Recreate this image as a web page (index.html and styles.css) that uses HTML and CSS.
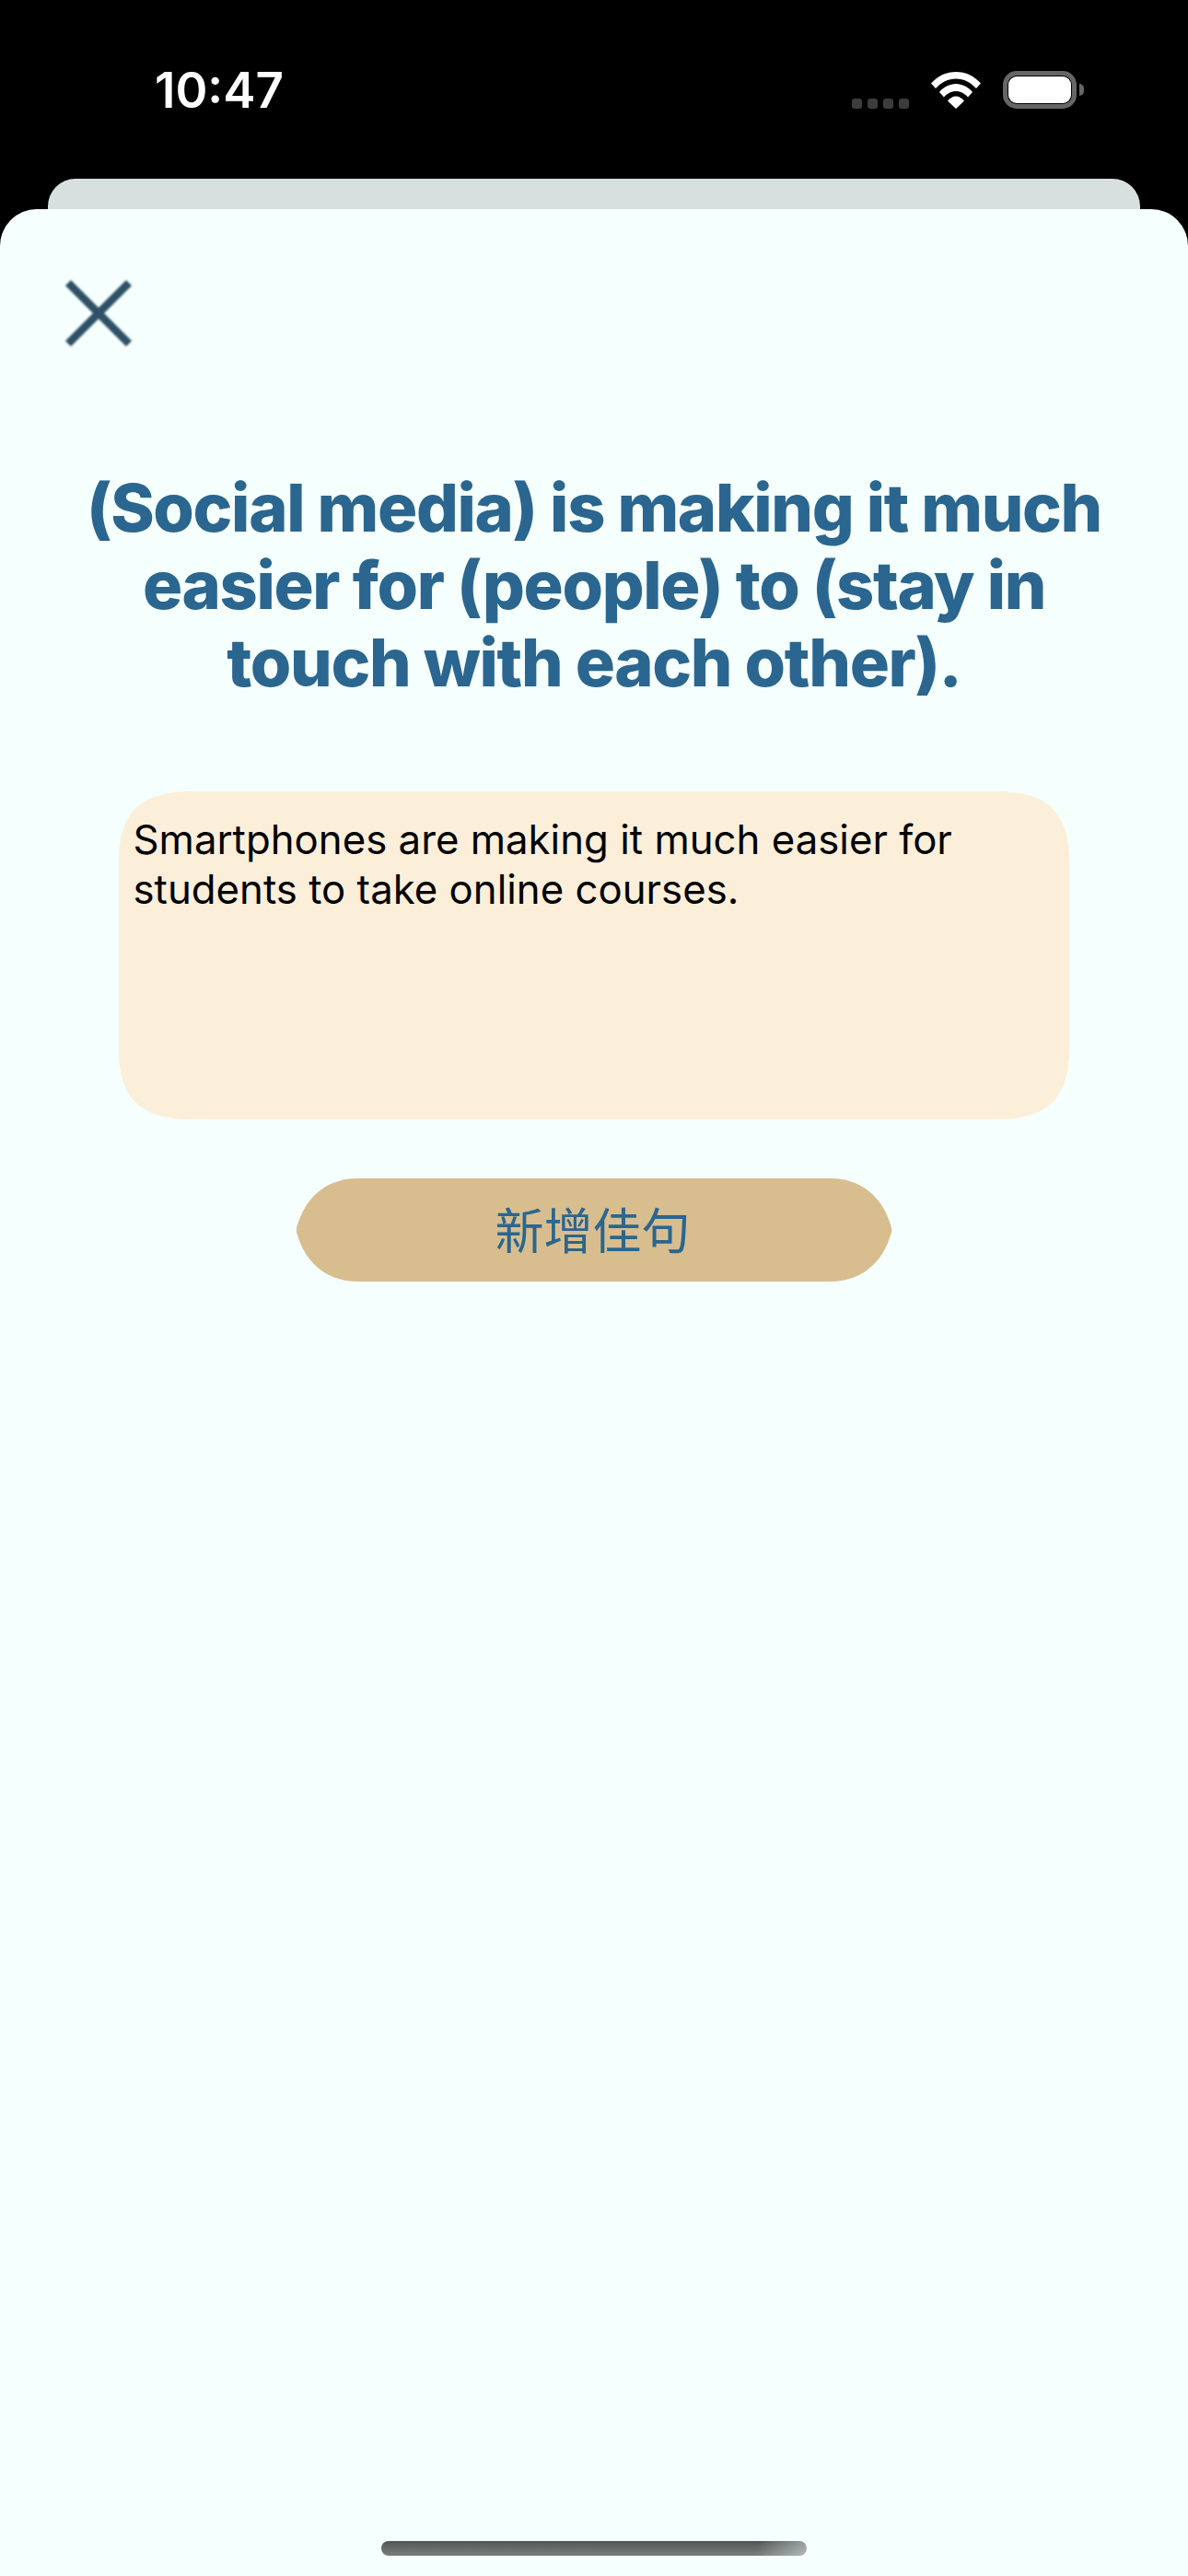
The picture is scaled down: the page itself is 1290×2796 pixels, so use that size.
FILE: index.html
```html
<!DOCTYPE html>
<html lang="zh-Hant">
<head>
<meta charset="utf-8">
<title>新增佳句</title>
<link rel="stylesheet" href="styles.css">
</head>
<body>
<div class="screen">
  <header class="status">
    <span class="time">10:47</span>
    <div class="status-right">
      <div class="dots"><i></i><i></i><i></i><i></i></div>
      <svg class="wifi" viewBox="0 0 54 40" width="54" height="40">
        <path fill="#fff" d="M0 12.500C7 4.500 16.500 0 27 0s20 4.500 27 12.500l-5 5.500C43 11.500 35.500 7.500 27 7.500S11 11.500 5 18z"/>
        <path fill="#fff" d="M9 22C13.500 16.500 20 13 27 13s13.500 3.500 18 9l-5 5.500C36.500 23.500 32 21 27 21s-9.500 2.500-13 6.500z"/>
        <path fill="#fff" d="M18 31.500C20.300 28.500 23.500 26.500 27 26.500s6.700 2 9 5L27 40z"/>
      </svg>
      <div class="battery"><div class="battery-fill"></div></div>
      <div class="battery-nub"></div>
    </div>
  </header>
  <div class="back-card"></div>
  <main class="sheet">
    <button class="close" aria-label="關閉">
      <svg viewBox="0 0 74 74" width="74" height="74">
        <path d="M4 4L70 70M70 4L4 70" stroke="#2f5166" stroke-width="8.500" stroke-linecap="butt" fill="none"/>
      </svg>
    </button>
    <h1 class="title">(Social media) is making it much easier for (people) to (stay in touch with each other).</h1>
    <div class="answer">Smartphones are making it much easier for students to take online courses.</div>
    <button class="add">新增佳句</button>
    <div class="home-bar"></div>
  </main>
</div>
</body>
</html>
```
FILE: styles.css
```css
* { box-sizing: border-box; }
html, body { margin: 0; padding: 0; background: #000; }
.screen {
  width: 1290px;
  height: 2796px;
  display: flex;
  flex-direction: column;
  overflow: hidden;
  font-family: "Inter", "Noto Sans CJK TC", sans-serif;
}
.status {
  height: 194px;
  flex: none;
  display: flex;
  justify-content: space-between;
  align-items: flex-start;
  padding: 0 113px 0 168px;
  color: #fff;
}
.time {
  font-size: 53px;
  font-weight: 600;
  line-height: 60px;
  margin-top: 68px;
}
.status-right {
  display: flex;
  align-items: flex-start;
  padding-top: 77px;
}
.dots {
  display: flex;
  gap: 6px;
  margin-top: 30px;
  margin-right: 24px;
}
.dots i {
  width: 11px;
  height: 11px;
  border-radius: 3px;
  background: #3c3c3c;
}
.wifi { display: block; margin-top: 1px; margin-right: 24px; }
.battery {
  width: 80px;
  height: 41px;
  border: 5px solid #666;
  border-radius: 15px;
  padding: 1px;
}
.battery-fill {
  width: 100%;
  height: 100%;
  background: #fff;
  border-radius: 9px;
}
.battery-nub {
  width: 5px;
  height: 13px;
  margin: 14px 0 0 3px;
  background: #666;
  border-radius: 0 7px 7px 0;
}
.back-card {
  height: 33px;
  flex: none;
  margin: 0 52px;
  background: #d8e0df;
  border-radius: 30px 30px 0 0;
}
.sheet {
  flex: 1;
  background: #f5fffd;
  border-radius: 40px 40px 0 0;
  display: flex;
  flex-direction: column;
  align-items: center;
  padding-top: 76px;
}
.close {
  align-self: flex-start;
  margin-left: 70px;
  padding: 0;
  border: 0;
  background: none;
  display: block;
  height: 74px;
}
.close svg { display: block; filter: blur(1px); }
.title {
  margin: 132px 0 0;
  width: 1130px;
  font-size: 72px;
  font-weight: 800;
  line-height: 84px;
  letter-spacing: -1.350px;
  text-align: center;
  color: #2a668f;
}
.answer {
  margin-top: 98px;
  width: 1033px;
  height: 356px;
  padding: 26px 16px;
  background: #fcefda;
  clip-path: path("M80 0H953C1010 0 1033 23 1033 80V276C1033 333 1010 356 953 356H80C23 356 0 333 0 276V80C0 23 23 0 80 0Z");
  font-size: 43.750px;
  line-height: 54px;
  color: #000;
}
.add {
  margin-top: 64px;
  width: 647px;
  height: 112px;
  padding: 0 3px 5px 0;
  border: 0;
  background: #d8bd8e;
  clip-path: path("M68 0H579C622 0 641 30 647 56C641 82 622 112 579 112H68C25 112 6 82 0 56C6 30 25 0 68 0Z");
  font-family: "Noto Sans CJK TC", sans-serif;
  font-size: 53px;
  color: #2a668f;
}
.home-bar {
  margin-top: auto;
  margin-bottom: 22px;
  width: 462px;
  height: 16px;
  border-radius: 8px;
  background:
    linear-gradient(100deg, transparent 88%, rgba(245,255,253,.45) 100%),
    linear-gradient(#515554, #7b7f7e);
}
```
